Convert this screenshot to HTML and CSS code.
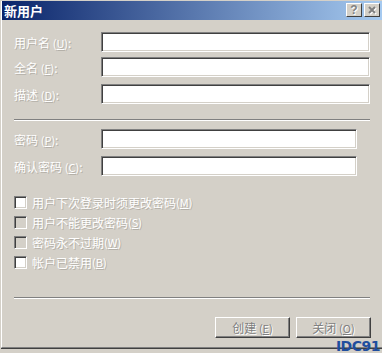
FILE: index.html
```html
<!DOCTYPE html>
<html lang="zh-CN">
<head>
    <meta charset="UTF-8">
    <title>新用户</title>
    <link rel="stylesheet" href="styles.css">
</head>
<body>
    <div class="window">
        <div class="frame">
            <div class="titlebar">
                <span class="title">新用户</span>
                <div class="title-buttons">
                    <span class="tbtn help">?</span>
                    <span class="tbtn">
                        <svg width="16" height="14" viewBox="0 0 16 14">
                            <path d="M5 4 L11 10 M11 4 L5 10" stroke="#fff" stroke-width="2" transform="translate(1,1)"/>
                            <path d="M5 4 L11 10 M11 4 L5 10" stroke="#808080" stroke-width="2"/>
                        </svg>
                    </span>
                </div>
            </div>

            <div class="content">
                <div class="row">
                    <label class="label">用户名 <span class="key">(<u>U</u>)</span>:</label>
                    <div class="field"></div>
                </div>
                <div class="row row-gap">
                    <label class="label">全名 <span class="key">(<u>F</u>)</span>:</label>
                    <div class="field"></div>
                </div>
                <div class="row">
                    <label class="label">描述 <span class="key">(<u>D</u>)</span>:</label>
                    <div class="field"></div>
                </div>

                <div class="sep sep-top"></div>

                <div class="row row-gap">
                    <label class="label">密码 <span class="key">(<u>P</u>)</span>:</label>
                    <div class="field short"></div>
                </div>
                <div class="row">
                    <label class="label">确认密码 <span class="key">(<u>C</u>)</span>:</label>
                    <div class="field short"></div>
                </div>

                <div class="checks">
                    <div class="check"><span class="box white"></span>用户下次登录时须更改密码 <span class="key">(<u>M</u>)</span></div>
                    <div class="check"><span class="box"></span>用户不能更改密码 <span class="key">(<u>S</u>)</span></div>
                    <div class="check"><span class="box"></span>密码永不过期 <span class="key">(<u>W</u>)</span></div>
                    <div class="check"><span class="box white"></span>帐户已禁用 <span class="key">(<u>B</u>)</span></div>
                </div>

                <div class="sep sep-bottom"></div>

                <div class="buttons">
                    <button class="btn">创建 <span class="key">(<u>E</u>)</span></button>
                    <button class="btn">关闭 <span class="key">(<u>O</u>)</span></button>
                </div>
            </div>
        </div>
        <div class="watermark">IDC91</div>
    </div>
</body>
</html>
```

FILE: styles.css
```css
body {
    margin: 0;
    background: #d4d0c8;
    font-family: "Noto Sans CJK SC", "Liberation Sans", sans-serif;
    font-size: 12px;
    overflow: hidden;
}
.window {
    position: relative;
    width: 381px;
    height: 352px;
    border-top: 1px solid #d4d0c8;
    border-left: 1px solid #d4d0c8;
    background: #d4d0c8;
    overflow: hidden;
}
.frame {
    height: 346px;
    border-left: 1px solid #fff;
    border-bottom: 1px solid #808080;
    box-shadow: 0 1px 0 #404040;
}
.titlebar {
    display: flex;
    justify-content: space-between;
    height: 19px;
    background: linear-gradient(to right, #0a246a, #a6caf0);
}
.title {
    color: #fff;
    font-weight: bold;
    font-size: 13px;
    line-height: 19px;
    padding-left: 2px;
}
.title-buttons {
    display: flex;
    gap: 2px;
    padding: 2px 2px 0 0;
}
.tbtn {
    width: 16px;
    height: 14px;
    box-sizing: border-box;
    background: #d4d0c8;
    border-top: 1px solid #fff;
    border-left: 1px solid #fff;
    border-right: 1px solid #404040;
    border-bottom: 1px solid #404040;
    display: flex;
    align-items: center;
    justify-content: center;
    overflow: hidden;
}
.tbtn svg {
    display: block;
    margin: -1px;
}
.help {
    font-family: "Liberation Sans", sans-serif;
    font-weight: bold;
    font-size: 12px;
    line-height: 12px;
    color: #808080;
    text-shadow: 1px 1px 0 #fff;
}
.content {
    padding: 12px 11px 0 12px;
}
.row {
    display: flex;
    align-items: center;
    height: 20px;
    margin-bottom: 5px;
}
.row-gap {
    margin-bottom: 7px;
}
.label {
    width: 87px;
    color: #fff;
    text-shadow: 1px 1px 0 #b4b0a8;
}
.key {
    font-size: 11px;
}
.field {
    width: 269px;
    height: 20px;
    box-sizing: border-box;
    background: #fff;
    border-top: 1px solid #808080;
    border-left: 1px solid #808080;
    border-right: 1px solid #fff;
    border-bottom: 1px solid #fff;
    box-shadow: inset 1px 1px 0 #404040, inset -1px -1px 0 #d4d0c8;
}
.field.short {
    width: 256px;
}
.sep {
    height: 1px;
    background: #808080;
    border-bottom: 1px solid #fff;
    width: 356px;
}
.sep-top {
    margin: 15px 0 8px;
}
.checks {
    margin-top: 16px;
}
.check {
    display: flex;
    align-items: center;
    height: 20px;
    color: #fff;
    text-shadow: 1px 1px 0 #b4b0a8;
}
.box {
    width: 13px;
    height: 13px;
    box-sizing: border-box;
    margin-right: 5px;
    background: #d4d0c8;
    border-top: 1px solid #808080;
    border-left: 1px solid #808080;
    border-right: 1px solid #fff;
    border-bottom: 1px solid #fff;
    box-shadow: inset 1px 1px 0 #404040, inset -1px -1px 0 #d4d0c8;
}
.box.white {
    background: #fff;
}
.sep-bottom {
    margin-top: 25px;
}
.buttons {
    display: flex;
    justify-content: flex-end;
    gap: 6px;
    margin-top: 18px;
}
.btn {
    width: 75px;
    height: 21px;
    padding: 0;
    font-family: inherit;
    font-size: 12px;
    background: #d4d0c8;
    color: #808080;
    text-shadow: 1px 1px 0 #fff;
    border-top: 1px solid #fff;
    border-left: 1px solid #fff;
    border-right: 1px solid #404040;
    border-bottom: 1px solid #404040;
    box-shadow: inset -1px -1px 0 #808080;
}
.watermark {
    position: absolute;
    right: 2px;
    bottom: 0;
    line-height: 14px;
    color: #1f4e9e;
    font-family: "DejaVu Sans", sans-serif;
    font-weight: bold;
    font-size: 14px;
    letter-spacing: -0.5px;
}
```
